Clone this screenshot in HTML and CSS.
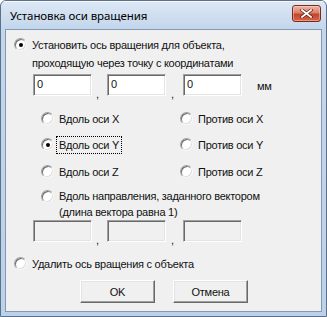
FILE: index.html
```html
<!DOCTYPE html>
<html lang="ru">
<head>
  <meta charset="UTF-8">
  <title>Установка оси вращения</title>
  <link rel="stylesheet" href="styles.css">
</head>
<body>
<div class="window">
  <div class="titlebar">
    <span class="title">Установка оси вращения</span>
    <span class="close">
      <svg width="13" height="9" viewBox="0 0 13 9">
        <path d="M2 1 L11 8 M11 1 L2 8" stroke="#5a1a10" stroke-width="3.2" stroke-linecap="square"/>
        <path d="M2 1 L11 8 M11 1 L2 8" stroke="#fff" stroke-width="1.8" stroke-linecap="square"/>
      </svg>
    </span>
  </div>

  <div class="client">
    <div class="row top-row">
      <span class="radio checked"></span>
      <span class="label">Установить ось вращения для объекта,</span>
    </div>
    <div class="row second-line">проходящую через точку с координатами</div>

    <div class="edits">
      <span class="edit">0</span>
      <span class="comma">,</span>
      <span class="edit">0</span>
      <span class="comma wide">,</span>
      <span class="edit">0</span>
      <span class="unit">мм</span>
    </div>

    <div class="axes">
      <div class="row"><span class="radio"></span><span class="label">Вдоль оси X</span></div>
      <div class="row"><span class="radio"></span><span class="label">Против оси X</span></div>
      <div class="row"><span class="radio checked"></span><span class="label focus">Вдоль оси Y</span></div>
      <div class="row"><span class="radio"></span><span class="label">Против оси Y</span></div>
      <div class="row"><span class="radio"></span><span class="label">Вдоль оси Z</span></div>
      <div class="row"><span class="radio"></span><span class="label">Против оси Z</span></div>
    </div>

    <div class="vector">
      <span class="radio"></span>
      <span class="label">Вдоль направления, заданного вектором<br>(длина вектора равна 1)</span>
    </div>

    <div class="edits disabled">
      <span class="edit"></span>
      <span class="comma">,</span>
      <span class="edit"></span>
      <span class="comma wide">,</span>
      <span class="edit"></span>
    </div>

    <div class="row remove-row">
      <span class="radio"></span>
      <span class="label">Удалить ось вращения с объекта</span>
    </div>

    <div class="buttons">
      <span class="button">OK</span>
      <span class="button">Отмена</span>
    </div>
  </div>
</div>
</body>
</html>
```

FILE: styles.css
```css
body {
  margin: 0;
  background: #fff;
}

.window {
  width: 327px;
  height: 317px;
  box-sizing: border-box;
  border: 1px solid #5d7088;
  border-radius: 6px 6px 0 0;
  background: linear-gradient(#dde8f5, #c3d6ec 28px, #bcd2ea);
  display: flex;
  flex-direction: column;
  overflow: hidden;
}

.titlebar {
  height: 28px;
  flex: none;
  display: flex;
  align-items: center;
  padding-left: 9px;
  padding-right: 5px;
  box-shadow: inset 0 1px 0 #f4f8fc;
}

.title {
  font-family: "Noto Sans", sans-serif;
  font-size: 11.5px;
  letter-spacing: -0.1px;
  color: #000;
  flex: 1;
  padding-top: 1px;
}

.close {
  width: 29px;
  height: 17px;
  box-sizing: border-box;
  margin-top: -3px;
  border: 1px solid #7c2a1c;
  border-radius: 3px;
  background: linear-gradient(#eeb5a6, #d8806b 45%, #c3452c 55%, #d5654a);
  box-shadow: inset 0 0 0 1px rgba(255, 220, 210, .45);
  display: flex;
  align-items: center;
  justify-content: center;
}

.close svg {
  display: block;
}

.client {
  flex: 1;
  margin: 0 4px 4px;
  border: 1px solid #8398b2;
  background: #f0f0f0;
  padding: 6px 0 0 8px;
  font-family: "Liberation Sans", Arial, sans-serif;
  font-size: 11px;
  letter-spacing: -0.25px;
  color: #111;
}

.row {
  height: 17px;
  display: flex;
  align-items: center;
}

.radio {
  width: 13px;
  height: 13px;
  box-sizing: border-box;
  flex: none;
  border-radius: 50%;
  border: 1px solid;
  border-color: #a0a0a0 #f8f8f8 #f8f8f8 #a0a0a0;
  box-shadow: inset 1px 1px 0 #6c6c6c, inset -1px -1px 0 #dcdcdc;
  background: #fff;
  display: flex;
  align-items: center;
  justify-content: center;
}

.radio.checked::after {
  content: "";
  width: 4px;
  height: 4px;
  border-radius: 50%;
  background: #000;
}

.label {
  margin-left: 5px;
  line-height: 16px;
}

.second-line {
  height: 16px;
  margin-top: 2px;
  padding-left: 18px;
}

.edits {
  display: flex;
  align-items: flex-start;
  height: 22px;
  margin-top: 3px;
  margin-left: 19px;
}

.edit {
  width: 59px;
  height: 22px;
  box-sizing: border-box;
  border: 1px solid;
  border-color: #a0a0a0 #fff #fff #a0a0a0;
  box-shadow: inset 1px 1px 0 #696969, inset -1px -1px 0 #e3e3e3;
  background: #fff;
  padding: 2px 0 0 3px;
  line-height: 15px;
}

.disabled .edit {
  background: #f0f0f0;
}

.comma {
  width: 15px;
  padding-left: 4px;
  box-sizing: border-box;
  line-height: 16px;
  padding-top: 12px;
}

.comma.wide {
  width: 17px;
  padding-left: 5px;
}

.unit {
  margin-left: 15px;
  padding-top: 4px;
  line-height: 16px;
}

.axes {
  display: grid;
  grid-template-columns: 139px auto;
  row-gap: 9px;
  margin-top: 14px;
  margin-left: 27px;
}

.axes .row:nth-child(n+5) {
  margin-top: 1px;
}

.focus {
  outline: 1px dotted #000;
  outline-offset: 0;
  padding: 0 2px;
  margin-left: 3px;
}

.vector {
  display: flex;
  align-items: flex-start;
  margin-top: 8px;
  margin-left: 27px;
}

.vector .radio {
  margin-top: 2px;
}

.edits.disabled {
  margin-top: 0;
}

.remove-row {
  margin-top: 13px;
}

.buttons {
  display: flex;
  gap: 18px;
  margin-top: 8px;
  margin-left: 66px;
}

.button {
  width: 75px;
  height: 23px;
  box-sizing: border-box;
  border: 1px solid;
  border-color: #fff #696969 #696969 #fff;
  box-shadow: inset -1px -1px 0 #a0a0a0, inset 1px 1px 0 #e3e3e3;
  background: #f0f0f0;
  display: flex;
  align-items: center;
  justify-content: center;
  line-height: 16px;
}
```
